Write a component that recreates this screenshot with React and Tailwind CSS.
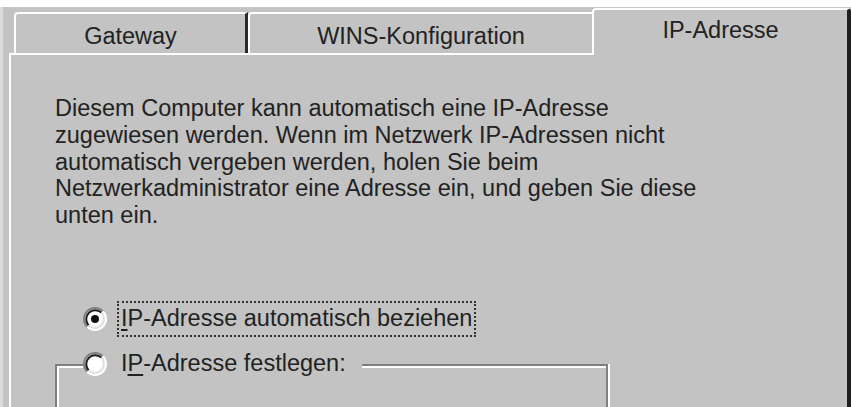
import React from 'react';

const FONT = { fontFamily: '"Liberation Sans", Arial, sans-serif' };

function Radio({ checked }) {
  return (
    <svg width="24" height="24" viewBox="0 0 24 24" className="shrink-0">
      <circle cx="12" cy="12" r="10" fill="#ffffff" />
      <path d="M19.78 4.22 A11 11 0 0 0 4.22 19.78" fill="none" stroke="#808080" strokeWidth="2" />
      <path d="M4.22 19.78 A11 11 0 0 0 19.78 4.22" fill="none" stroke="#ffffff" strokeWidth="2" />
      <path d="M18.36 5.64 A9 9 0 0 0 5.64 18.36" fill="none" stroke="#1a1a1a" strokeWidth="2" />
      <path d="M5.64 18.36 A9 9 0 0 0 18.36 5.64" fill="none" stroke="#dfdfdf" strokeWidth="2" />
      {checked && <circle cx="12" cy="12" r="4" fill="#111111" />}
    </svg>
  );
}

export default function App() {
  return (
    <div
      className="flex h-[407px] w-[851px] flex-col overflow-hidden bg-white text-[#222222]"
      style={FONT}
    >
      <div className="h-[7px] shrink-0 bg-white" />
      <div className="flex flex-1 bg-[#c3c3c3]">
        <div className="w-[3px] bg-[#dcdcdc]" />
        <div className="w-[6px]" />
        <div className="flex flex-1 flex-col">
          {/* tabs */}
          <div className="flex h-[48px] shrink-0 items-end">
            <div className="flex h-full w-[583px] items-end border-b-2 border-white">
              <div className="w-[5px]" />
              <div className="flex h-[41px] w-[234px] items-center justify-center rounded-tl-[4px] border-l-2 border-r-[3px] border-t-2 border-white border-r-[#2a2a2a] pt-[6px] text-[23.5px]">
                Gateway
              </div>
              <div className="flex h-[41px] flex-1 items-center justify-center rounded-tl-[4px] border-l-2 border-t-2 border-white pt-[6px] text-[23.5px]">
                WINS-Konfiguration
              </div>
            </div>
            <div className="flex h-[47px] flex-1 justify-center rounded-t-[4px] border-l-2 border-r-4 border-t-2 border-white border-r-[#202020] pt-[7px] text-[23.5px] leading-[27px]">
              IP-Adresse
            </div>
          </div>

          {/* panel */}
          <div className="flex flex-1 flex-col border-l-2 border-r-4 border-white border-r-[#202020]">
            <p className="ml-[44px] mt-[40px] whitespace-nowrap text-[23.5px] leading-[26.75px]">
              Diesem Computer kann automatisch eine IP-Adresse
              <br />
              zugewiesen werden. Wenn im Netzwerk IP-Adressen nicht
              <br />
              automatisch vergeben werden, holen Sie beim
              <br />
              Netzwerkadministrator eine Adresse ein, und geben Sie diese
              <br />
              unten ein.
            </p>

            <div className="ml-[72px] mt-[72px] flex h-[36px] items-center gap-[10px]">
              <Radio checked />
              <span className="flex h-[36px] items-center whitespace-nowrap border-2 border-dotted border-[#333333] px-[2px] text-[23.5px] leading-[27px]">
                <span className="underline underline-offset-[3px]">I</span>P-Adresse automatisch beziehen
              </span>
            </div>

            <div className="relative ml-[44px] mt-[27px] w-[553px] flex-1 border-l-2 border-r-2 border-t-2 border-[#808080] shadow-[inset_2px_2px_0_#ffffff,2px_0_0_#ffffff]">
              <div className="absolute left-[26px] top-[-20px] flex h-[36px] items-center gap-[10px] bg-[#c3c3c3] pr-[12px]">
                <Radio />
                <span className="flex h-[36px] items-center whitespace-nowrap border-2 border-transparent px-[2px] text-[23.5px] leading-[27px]">
                  I<span className="underline underline-offset-[3px]">P</span>-Adresse festlegen:
                </span>
              </div>
            </div>
          </div>
        </div>
      </div>
    </div>
  );
}
